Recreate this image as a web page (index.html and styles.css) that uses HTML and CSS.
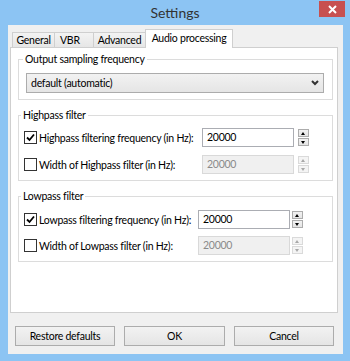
FILE: index.html
```html
<!DOCTYPE html>
<html>
<head>
<meta charset="utf-8">
<link rel="stylesheet" href="styles.css">
</head>
<body>
<div class="window">
  <div class="titlebar">
    <span class="title">Settings</span>
    <div class="close"><svg width="9" height="9" viewBox="0 0 9 9"><path d="M1 1 L8 8 M8 1 L1 8" stroke="#fff" stroke-width="2"/></svg></div>
  </div>
  <div class="client">
    <div class="tabs">
      <div class="tab t-general">General</div>
      <div class="tab t-vbr">VBR</div>
      <div class="tab t-adv">Advanced</div>
      <div class="tab t-audio active">Audio processing</div>
    </div>
    <div class="panel">
      <fieldset class="group g1">
        <legend>Output sampling frequency</legend>
        <div class="select"><span>default (automatic)</span><svg width="8" height="6" viewBox="0 0 8 6"><path d="M1 1 L4 4 L7 1" stroke="#333" stroke-width="2" fill="none"/></svg></div>
      </fieldset>
      <fieldset class="group g2">
        <legend>Highpass filter</legend>
        <div class="row">
          <div class="check"><span class="box"><svg width="11" height="11" viewBox="0 0 11 11"><path d="M2 5.5 L4.5 8 L9 2.5" stroke="#000" stroke-width="1.8" fill="none"/></svg></span><span>Highpass filtering frequency (in Hz):</span></div>
          <div class="spin"><div class="input">20000</div><div class="arrows"><span class="arr up"></span><span class="arr down"></span></div></div>
        </div>
        <div class="row">
          <div class="check"><span class="box"></span><span>Width of Highpass filter (in Hz):</span></div>
          <div class="spin disabled"><div class="input">20000</div><div class="arrows"><span class="arr up"></span><span class="arr down"></span></div></div>
        </div>
      </fieldset>
      <fieldset class="group g3">
        <legend>Lowpass filter</legend>
        <div class="row">
          <div class="check"><span class="box"><svg width="11" height="11" viewBox="0 0 11 11"><path d="M2 5.5 L4.5 8 L9 2.5" stroke="#000" stroke-width="1.8" fill="none"/></svg></span><span>Lowpass filtering frequency (in Hz):</span></div>
          <div class="spin"><div class="input">20000</div><div class="arrows"><span class="arr up"></span><span class="arr down"></span></div></div>
        </div>
        <div class="row">
          <div class="check"><span class="box"></span><span>Width of Lowpass filter (in Hz):</span></div>
          <div class="spin disabled"><div class="input">20000</div><div class="arrows"><span class="arr up"></span><span class="arr down"></span></div></div>
        </div>
      </fieldset>
    </div>
    <div class="buttons">
      <div class="btn b-restore">Restore defaults</div>
      <div class="btn b-ok">OK</div>
      <div class="btn b-cancel">Cancel</div>
    </div>
  </div>
</div>
</body>
</html>
```

FILE: styles.css
```css
html, body { margin: 0; padding: 0; }
body { background: #8cc4f3; }
.window {
  width: 350px; height: 361px; background: #8cc4f3;
  display: flex; flex-direction: column;
  font-family: Lato, "Open Sans", sans-serif; font-size: 10.5px; letter-spacing: -0.25px; color: #000;
  box-sizing: border-box;
}
.titlebar { height: 25px; position: relative; display: flex; justify-content: center; align-items: center; flex: none; }
.title { font-size: 14px; letter-spacing: 0; color: #333; margin-top: -1px; }
.close {
  position: absolute; right: 5px; top: 1px; width: 26px; height: 16px;
  background: #c75050; display: flex; align-items: center; justify-content: center;
}
.client {
  margin: 0 7px 0 8px; height: 329px; background: #f0f0f0;
  padding: 4px 5px 0 2px; box-sizing: border-box;
  display: flex; flex-direction: column; flex: none;
}
.tabs { display: flex; align-items: flex-end; height: 18px; margin-left: 2px; position: relative; z-index: 1; flex: none; }
.tab {
  height: 15px; box-sizing: border-box; border: 1px solid #cfcfcf; border-bottom: none;
  background: linear-gradient(#f3f3f3, #e6e6e6); text-align: center; line-height: 14px; white-space: nowrap;
}
.tab + .tab { margin-left: -1px; }
.t-general { width: 43px; }
.t-vbr { width: 40px; text-align: left; padding-left: 5px; }
.t-adv { width: 53px; }
.t-audio { width: 88px; }
.tab.active { height: 19px; background: #fff; margin-bottom: -1px; line-height: 17px; }
.panel {
  height: 266px; box-sizing: border-box; border: 1px solid #cfcfcf; background: #fff;
  padding: 3px 4px 0 7px; flex: none;
}
.group { margin: 0; border: 1px solid #dcdcdc; min-width: 0; }
.group legend { padding: 0 2px; margin-left: -3px; line-height: 16px; }
.g1 { padding: 6px 8px 6px 7px; }
.select {
  height: 20px; box-sizing: border-box; border: 1px solid #acacac;
  background: linear-gradient(#f2f2f2, #e5e5e5);
  display: flex; align-items: center; justify-content: space-between; padding: 0 4px 0 4px;
}
.g2, .g3 { margin-top: 7px; padding: 5px 0 6px 5px; }
.g3 { padding-top: 6px; }
.row { display: grid; grid-template-columns: 178px auto; height: 19px; align-items: center; }
.g3 .row { grid-template-columns: 174px auto; }
.row + .row { margin-top: 8px; }
.g3 .row + .row { margin-top: 7px; }
.check { display: flex; align-items: center; gap: 2px; white-space: nowrap; }
.box {
  width: 13px; height: 13px; box-sizing: border-box; border: 1px solid #333; background: #fff;
  display: flex; align-items: center; justify-content: center; flex: none;
}
.spin { display: flex; align-items: center; }
.input {
  width: 92px; height: 19px; box-sizing: border-box; border: 1px solid #abadb3; background: #fff;
  padding-left: 4px; line-height: 17px;
}
.arrows { margin-left: 4px; display: flex; flex-direction: column; gap: 1px; }
.g3 .arrows { margin-left: 2px; }
.arr {
  width: 11px; height: 8px; box-sizing: border-box; border: 1px solid #acacac;
  background: linear-gradient(#f2f2f2, #e5e5e5); position: relative;
}
.arr::after {
  content: ""; position: absolute; left: 2px; width: 0; height: 0;
  border-left: 2.5px solid transparent; border-right: 2.5px solid transparent;
}
.up::after { top: 1.5px; border-bottom: 3px solid #000; }
.down::after { top: 1.5px; border-top: 3px solid #000; }
.disabled .input { background: #f0f0f0; border-color: #d9d9d9; color: #8a8a8a; }
.disabled .arr { border-color: #dadada; background: #f4f4f4; }
.disabled .up::after { border-bottom-color: #a8a8a8; }
.disabled .down::after { border-top-color: #a8a8a8; }
.buttons { display: flex; gap: 9px; margin-top: 13px; padding-left: 5px; flex: none; }
.btn {
  height: 20px; box-sizing: border-box; border: 1px solid #acacac;
  background: linear-gradient(#f2f2f2, #e5e5e5); text-align: center; line-height: 18px;
}
.b-restore { width: 100px; }
.b-ok { width: 101px; }
.b-cancel { width: 100px; }
```
